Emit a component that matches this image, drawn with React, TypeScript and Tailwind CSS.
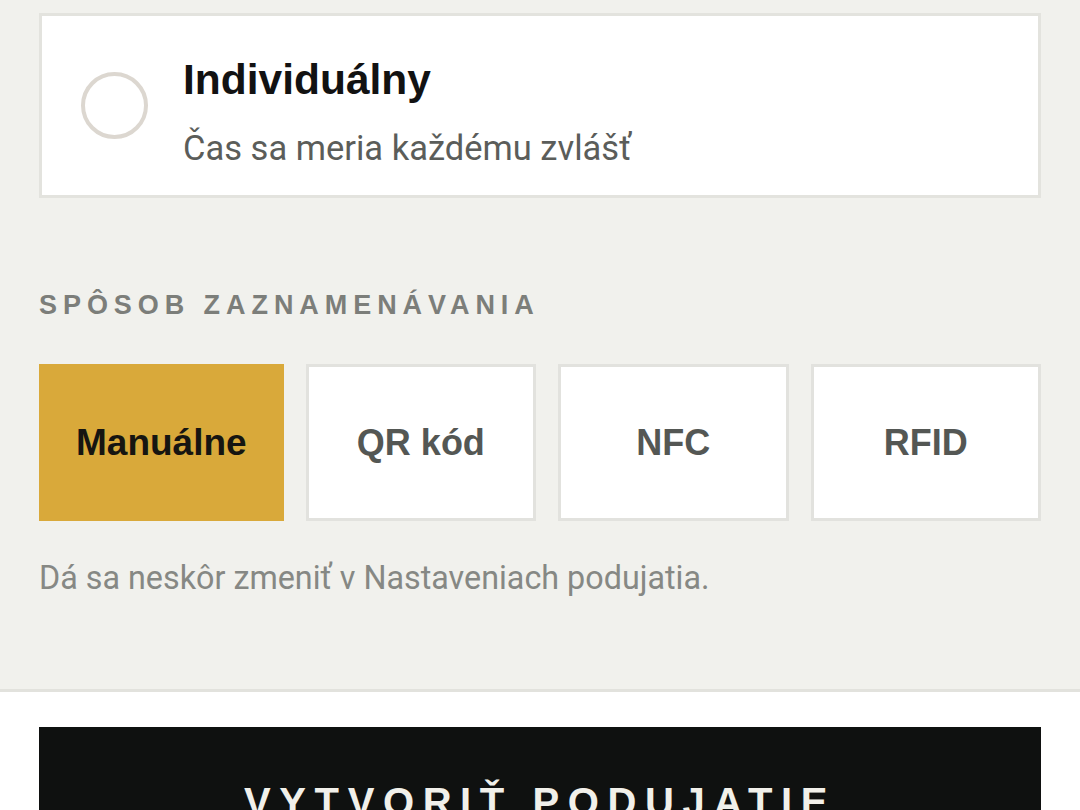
import { useState } from "react";

const methods = ["Manuálne", "QR kód", "NFC", "RFID"];

export default function App() {
  const [method, setMethod] = useState("Manuálne");

  return (
    <div className="min-h-screen w-full bg-white font-['Liberation_Sans',Arial,sans-serif]">
      {/* Form body */}
      <section className="bg-[#f1f1ed] px-[39px] pt-[13px] pb-[91px] border-b-[3px] border-[#e2e2dd]">
        {/* Timing option card */}
        <button className="flex h-[185px] w-full items-center border-[3px] border-[#e3e3de] bg-white pl-[39px] text-left">
          <span className="h-[67px] w-[67px] shrink-0 rounded-full border-[4px] border-[#dcd7d0]" />
          <div className="ml-[35px] flex flex-col pt-[14px]">
            <span className="text-[42.5px] font-bold leading-[50px] text-[#121212]">Individuálny</span>
            <span className="mt-[21px] font-['Roboto',sans-serif] text-[34.5px] leading-[44px] text-[#5b5d5a]">
              Čas sa meria každému zvlášť
            </span>
          </div>
        </button>

        <h3 className="mt-[91px] text-[27px] font-bold uppercase leading-[32px] tracking-[0.22em] text-[#7c7e7a]">
          Spôsob zaznamenávania
        </h3>

        <div className="mt-[43px] flex gap-[22px]">
          {methods.map((m) => {
            const active = m === method;
            return (
              <button
                key={m}
                onClick={() => setMethod(m)}
                className={
                  active
                    ? "flex h-[157px] flex-1 items-center justify-center whitespace-nowrap border-[3px] border-[#d9a93a] bg-[#d9a93a] px-[34px] text-[37px] font-bold text-[#161511]"
                    : "flex h-[157px] flex-1 items-center justify-center whitespace-nowrap border-[3px] border-[#e2e2de] bg-white px-[34px] text-[36px] font-bold text-[#545754]"
                }
              >
                {m}
              </button>
            );
          })}
        </div>

        <p className="mt-[37px] font-['Roboto',sans-serif] text-[32.3px] leading-[40px] text-[#868884]">
          Dá sa neskôr zmeniť v Nastaveniach podujatia.
        </p>
      </section>

      {/* Footer action */}
      <div className="bg-white px-[39px] pt-[35px] pb-[40px]">
        <button className="flex h-[150px] w-full items-center justify-center bg-[#0f1110] text-[40px] font-bold uppercase tracking-[0.215em] text-[#f1f0ea]">
          Vytvoriť podujatie
        </button>
      </div>
    </div>
  );
}
